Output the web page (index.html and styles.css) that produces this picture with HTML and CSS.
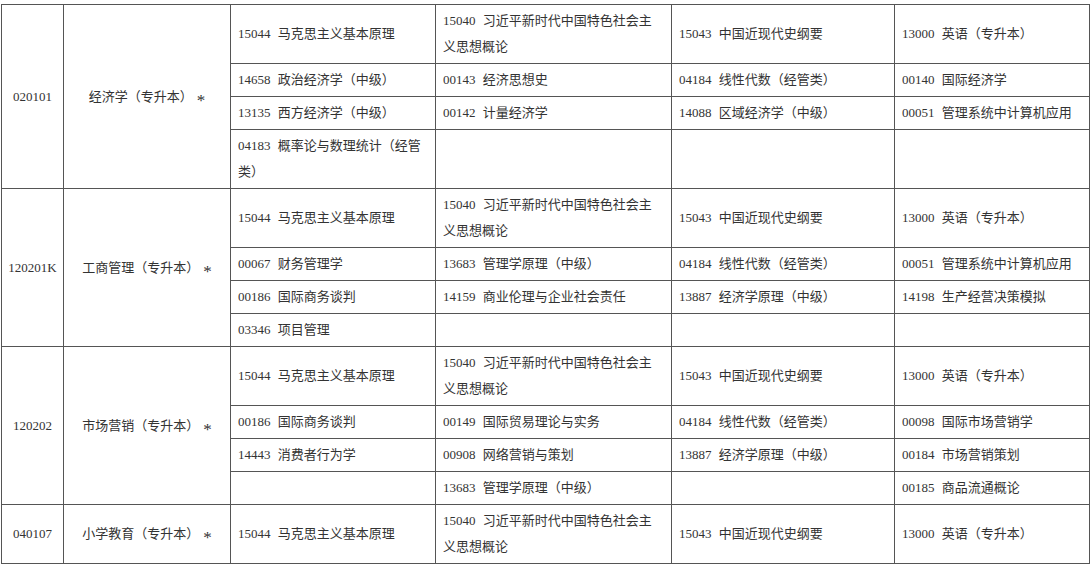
FILE: index.html
```html
<!DOCTYPE html>
<html lang="zh-CN">
<head>
<meta charset="utf-8">
<link rel="stylesheet" href="styles.css">
</head>
<body>
<table class="plan">
<colgroup>
<col class="c-code"><col class="c-name"><col class="c-a"><col class="c-b"><col class="c-c"><col class="c-d">
</colgroup>
<tbody>
<tr>
<td class="code" rowspan="4">020101</td>
<td class="name" rowspan="4">经济学（专升本）<span class="star">*</span></td>
<td>15044 马克思主义基本原理</td>
<td>15040 习近平新时代中国特色社会主义思想概论</td>
<td>15043 中国近现代史纲要</td>
<td>13000 英语（专升本）</td>
</tr>
<tr>
<td>14658 政治经济学（中级）</td>
<td>00143 经济思想史</td>
<td>04184 线性代数（经管类）</td>
<td>00140 国际经济学</td>
</tr>
<tr>
<td>13135 西方经济学（中级）</td>
<td>00142 计量经济学</td>
<td>14088 区域经济学（中级）</td>
<td>00051 管理系统中计算机应用</td>
</tr>
<tr>
<td>04183 概率论与数理统计（经管类）</td>
<td></td>
<td></td>
<td></td>
</tr>

<tr>
<td class="code" rowspan="4">120201K</td>
<td class="name" rowspan="4">工商管理（专升本）<span class="star">*</span></td>
<td>15044 马克思主义基本原理</td>
<td>15040 习近平新时代中国特色社会主义思想概论</td>
<td>15043 中国近现代史纲要</td>
<td>13000 英语（专升本）</td>
</tr>
<tr>
<td>00067 财务管理学</td>
<td>13683 管理学原理（中级）</td>
<td>04184 线性代数（经管类）</td>
<td>00051 管理系统中计算机应用</td>
</tr>
<tr>
<td>00186 国际商务谈判</td>
<td>14159 商业伦理与企业社会责任</td>
<td>13887 经济学原理（中级）</td>
<td>14198 生产经营决策模拟</td>
</tr>
<tr>
<td>03346 项目管理</td>
<td></td>
<td></td>
<td></td>
</tr>

<tr>
<td class="code" rowspan="4">120202</td>
<td class="name" rowspan="4">市场营销（专升本）<span class="star">*</span></td>
<td>15044 马克思主义基本原理</td>
<td>15040 习近平新时代中国特色社会主义思想概论</td>
<td>15043 中国近现代史纲要</td>
<td>13000 英语（专升本）</td>
</tr>
<tr>
<td>00186 国际商务谈判</td>
<td>00149 国际贸易理论与实务</td>
<td>04184 线性代数（经管类）</td>
<td>00098 国际市场营销学</td>
</tr>
<tr>
<td>14443 消费者行为学</td>
<td>00908 网络营销与策划</td>
<td>13887 经济学原理（中级）</td>
<td>00184 市场营销策划</td>
</tr>
<tr>
<td></td>
<td>13683 管理学原理（中级）</td>
<td></td>
<td>00185 商品流通概论</td>
</tr>

<tr>
<td class="code">040107</td>
<td class="name">小学教育（专升本）<span class="star">*</span></td>
<td>15044 马克思主义基本原理</td>
<td>15040 习近平新时代中国特色社会主义思想概论</td>
<td>15043 中国近现代史纲要</td>
<td>13000 英语（专升本）</td>
</tr>
</tbody>
</table>
</body>
</html>
```

FILE: styles.css
```css
html, body {
  margin: 0;
  padding: 0;
  background: #ffffff;
}
body {
  padding: 4px 0 0 1px;
  font-family: "Liberation Serif", "Noto Sans CJK SC", serif;
  font-size: 13px;
  color: #333333;
}
.plan {
  border-collapse: collapse;
  table-layout: fixed;
  width: 1088px;
}
.c-code { width: 62px; }
.c-name { width: 167px; }
.c-a { width: 205px; }
.c-b { width: 236px; }
.c-c { width: 223px; }
.c-d { width: 195px; }
.plan td {
  border: 1px solid #555555;
  padding: 3px 8px 3px 7px;
  line-height: 26px;
  height: 26px;
  vertical-align: middle;
  text-align: left;
  word-spacing: 4px;
  font-weight: 400;
}
.plan td.code {
  text-align: center;
  padding: 3px 2px;
}
.plan td.name {
  text-align: center;
  padding: 3px 4px;
}
.star {
  display: inline-block;
  margin-left: 4px;
  font-size: 17px;
  vertical-align: -5px;
  line-height: 1;
}
```
